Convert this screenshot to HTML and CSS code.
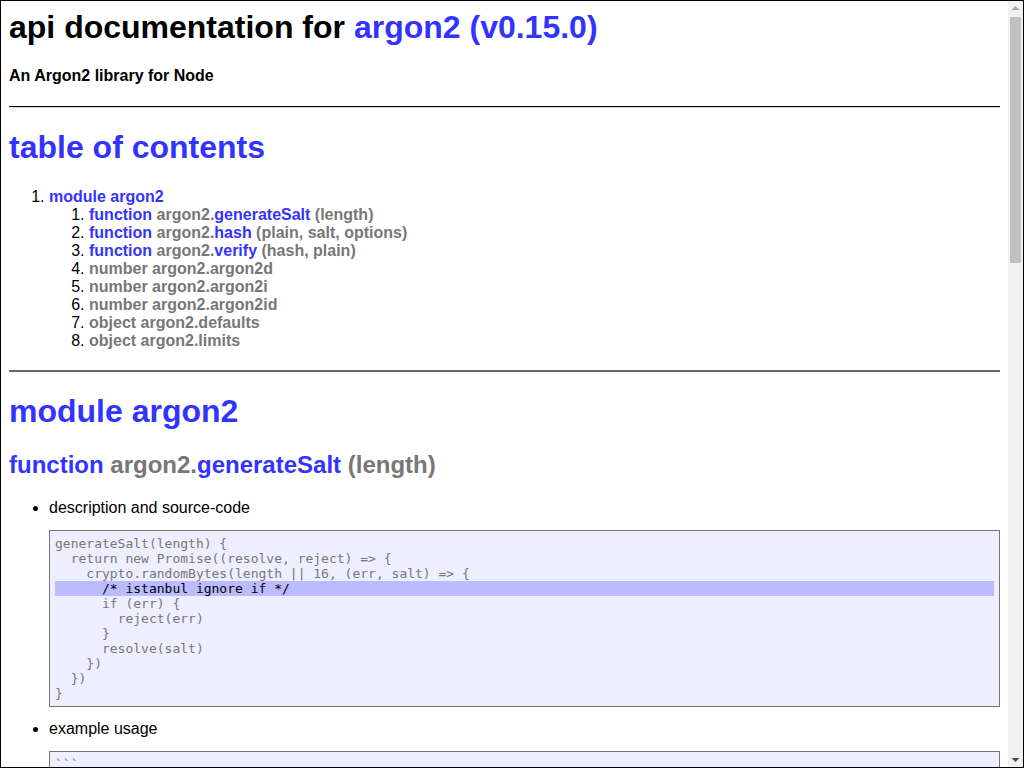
FILE: index.html
```html
<!doctype html>
<html lang="en">
<head>
<meta charset="utf-8">
<title>api documentation for argon2 (v0.15.0)</title>
<link rel="stylesheet" href="styles.css">
</head>
<body>
<div class="frame">
<div class="page">
<div class="apidoc">
<h1 class="doc-title">api documentation for <a class="link" href="#">argon2 (v0.15.0)</a></h1>
<h4 class="subtitle">An Argon2 library for Node</h4>
<hr class="rule-top">

<h1 class="section-title"><a class="link" href="#">table of contents</a></h1>
<ol class="toc">
<li><a class="link" href="#">module argon2</a>
<ol class="toc-sub">
<li><span class="sig"><a class="link" href="#">function</a> argon2.<a class="link" href="#">generateSalt</a> (length)</span></li>
<li><span class="sig"><a class="link" href="#">function</a> argon2.<a class="link" href="#">hash</a> (plain, salt, options)</span></li>
<li><span class="sig"><a class="link" href="#">function</a> argon2.<a class="link" href="#">verify</a> (hash, plain)</span></li>
<li><span class="sig">number argon2.argon2d</span></li>
<li><span class="sig">number argon2.argon2i</span></li>
<li><span class="sig">number argon2.argon2id</span></li>
<li><span class="sig">object argon2.defaults</span></li>
<li><span class="sig">object argon2.limits</span></li>
</ol>
</li>
</ol>

<hr class="rule-section">
<h1 class="section-title"><a class="link" href="#">module argon2</a></h1>

<h2 class="element-title"><a class="link" href="#">function</a> <span class="sig">argon2.</span><a class="link" href="#">generateSalt</a> <span class="sig">(length)</span></h2>
<ul class="details">
<li>description and source-code<pre class="code">generateSalt(length) {
  return new Promise((resolve, reject) =&gt; {
    crypto.randomBytes(length || 16, (err, salt) =&gt; {
<span class="hl">      /* istanbul ignore if */
</span>      if (err) {
        reject(err)
      }
      resolve(salt)
    })
  })
}</pre></li>
<li>example usage<pre class="code">```
const argon2 = require('argon2');

argon2.generateSalt().then(salt =&gt; {
  // ...
});
```</pre></li>
</ul>

<h2 class="element-title"><a class="link" href="#">function</a> <span class="sig">argon2.</span><a class="link" href="#">hash</a> <span class="sig">(plain, salt, options)</span></h2>
<ul class="details">
<li>description and source-code<pre class="code">hash(plain, salt, options) {
  options = Object.assign({}, defaults, options)

  return new Promise((resolve, reject) =&gt; {
    bindings.hash(Buffer.from(plain), salt, options, resolve, reject)
  })
}</pre></li>
</ul>

<div class="footer">[ this document was created with <a class="link" href="#">utility2</a> ]</div>
</div>
</div>
<div class="scrollbar" aria-hidden="true">
<div class="sb-button"><svg width="15" height="15" viewBox="0 0 15 15"><path d="M3.5 9 L7.5 5 L11.5 9 Z" fill="#a3a3a3"/></svg></div>
<div class="sb-track"><div class="sb-thumb"></div></div>
<div class="sb-button"><svg width="15" height="15" viewBox="0 0 15 15"><path d="M3.5 6 L7.5 10 L11.5 6 Z" fill="#505050"/></svg></div>
</div>
</div>
</body>
</html>
```
FILE: styles.css
```css
html, body {
  margin: 0;
  padding: 0;
  background: #fff;
}

body {
  font-family: "Liberation Sans", Arial, sans-serif;
  color: #000;
}

.frame {
  box-sizing: border-box;
  height: 768px;
  border: 1px solid #000;
  display: flex;
  overflow: hidden;
}

.page {
  flex: 1;
  min-width: 0;
  overflow: hidden;
  padding: 8px;
}

.scrollbar {
  width: 15px;
  flex: none;
  background: #f1f1f1;
  display: flex;
  flex-direction: column;
}

.sb-button {
  height: 15px;
  flex: none;
}

.sb-button svg {
  display: block;
}

.sb-track {
  flex: 1;
  padding: 1px 2px 0;
}

.sb-thumb {
  height: 246px;
  background: #c1c1c1;
}

.apidoc {
  background: #fff;
}

.link {
  color: #33f;
  font-weight: bold;
  text-decoration: none;
}

.sig {
  color: #777;
  font-weight: bold;
}

h1 {
  font-size: 32px;
  margin: 21px 0;
}

.doc-title {
  margin-top: 0;
}

.subtitle {
  font-size: 16px;
  margin: 21px 0;
}

.rule-top {
  height: 0;
  border: 0;
  border-top: 1px solid #000;
  border-bottom: 1px solid #d8d8d8;
  margin: 8px 0;
}

.rule-section {
  height: 2px;
  border: 0;
  background: #666;
  margin: 20px 0 0;
}

.toc {
  margin: 22px 0 15px;
  padding-left: 40px;
}

.toc-sub {
  margin: 0;
  padding-left: 40px;
}

.element-title {
  font-size: 24px;
  margin: 20px 0;
}

.details {
  margin: 16px 0;
  padding-left: 40px;
}

.code {
  font-family: "DejaVu Sans Mono", monospace;
  font-size: 13px;
  background: #eef;
  border: 1px solid;
  color: #777;
  padding: 5px;
  margin: 13px 0;
  white-space: pre-wrap;
  overflow: auto;
}

.hl {
  display: block;
  background: #bbf;
  color: #000;
}

.footer {
  margin-top: 20px;
  text-align: center;
}
```
